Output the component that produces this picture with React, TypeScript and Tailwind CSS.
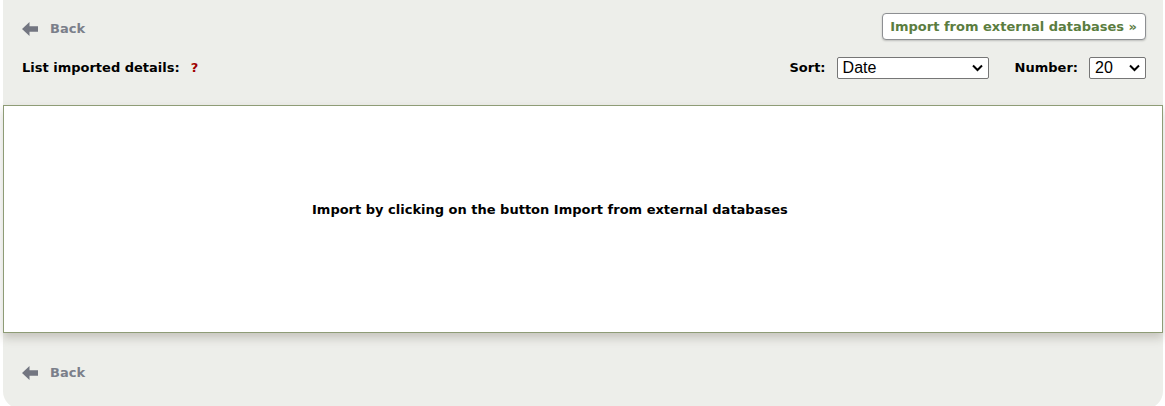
import React from "react";

function BackLink() {
  return (
    <a href="#" className="flex items-center gap-[12px] text-[#7b7f8a] font-bold">
      <svg width="16" height="14" viewBox="0 0 16 14">
        <path d="M0 7 L7.5 0 L7.5 4.3 L16 4.3 L16 9.7 L7.5 9.7 L7.5 14 Z" fill="#737681" />
      </svg>
      <span>Back</span>
    </a>
  );
}

function Select({ width, options, value }: { width: string; options: string[]; value: string }) {
  return (
    <div className={"relative ml-[11px] " + width}>
      <select
        className="appearance-none w-full h-[22px] border border-[#767676] rounded-[2px] bg-white font-normal text-[16px] leading-[20px] pl-[5px] text-black"
        style={{ fontFamily: '"Liberation Sans", Arial, sans-serif' }}
        defaultValue={value}
      >
        {options.map((o) => (
          <option key={o}>{o}</option>
        ))}
      </select>
      <svg
        className="absolute right-[6px] top-[7px] pointer-events-none"
        width="11"
        height="8"
        viewBox="0 0 11 8"
      >
        <path d="M1 1.5 L5.5 6 L10 1.5" stroke="#000" strokeWidth="2" fill="none" />
      </svg>
    </div>
  );
}

function App() {
  return (
    <div className="pl-[3px] pr-[2px] text-[13px]" style={{ fontFamily: '"DejaVu Sans", Verdana, sans-serif' }}>
      <div className="bg-[#edeeea] rounded-b-[18px] pb-[26px]">
        <div className="pl-[19px] pr-[17px] pt-[13px]">
          <div className="flex justify-between items-center h-[27px]">
            <div className="pt-[4px]">
              <BackLink />
            </div>
            <button
              type="button"
              className="h-[27px] pl-[7px] pr-[8px] bg-white border border-[#8d8f92] rounded-[4px] text-[#5b7d3f] font-bold shadow-[0_1px_2px_rgba(0,0,0,0.2)]"
            >
              Import from external databases »
            </button>
          </div>
          <div className="flex justify-between items-center mt-[17px] h-[22px]">
            <div className="flex items-center font-bold text-black">
              <span>List imported details:</span>
              <span className="ml-[11px] text-[#a00000]">?</span>
            </div>
            <div className="flex items-center font-bold">
              <span>Sort:</span>
              <Select width="w-[152px]" options={["Date", "Name"]} value="Date" />
              <span className="ml-[26px]">Number:</span>
              <Select width="w-[57px]" options={["10", "20", "50"]} value="20" />
            </div>
          </div>
        </div>
        <div className="mt-[26px] h-[228px] bg-white border border-[#8e9c76] shadow-[0_5px_9px_rgba(60,50,30,0.22)] pt-[94px] pl-[308px] font-bold text-black">
          Import by clicking on the button Import from external databases
        </div>
        <div className="px-[19px] mt-[30px]">
          <BackLink />
        </div>
      </div>
    </div>
  );
}

export default App;
